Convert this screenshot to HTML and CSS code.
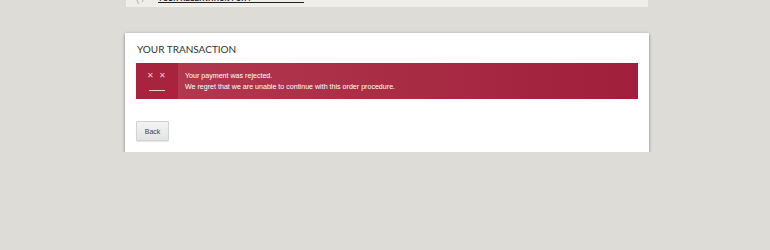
FILE: index.html
```html
<!DOCTYPE html>
<html lang="en">
<head>
  <meta charset="UTF-8">
  <meta name="viewport" content="width=device-width, initial-scale=1.0">
  <title>Your transaction</title>
  <link rel="stylesheet" href="styles.css">
</head>
<body>
  <div class="topbar">
    <span class="logo-mark">( /</span>
    <span class="reservation">YOUR RESERVATION FOR :</span>
  </div>

  <div class="card">
    <h2 class="card-title">YOUR TRANSACTION</h2>
    <div class="alert">
      <div class="alert-icon">
        <span class="crosses">&#x2715; &#x2715;</span>
        <span class="dash"></span>
      </div>
      <div class="alert-text">
        <p>Your payment was rejected.</p>
        <p>We regret that we are unable to continue with this order procedure.</p>
      </div>
    </div>
    <button class="back-btn">Back</button>
  </div>
</body>
</html>
```

FILE: styles.css
```css
body {
  margin: 0;
  background-color: #dddcd7;
  font-family: "Liberation Sans", Arial, sans-serif;
  color: #333;
}
.topbar {
  width: 522px;
  height: 7px;
  margin-left: 126px;
  background-color: #efeeea;
  position: relative;
  overflow: hidden;
}
.logo-mark {
  position: absolute;
  left: 10px;
  top: -7px;
  font-size: 10px;
  color: #aaa;
}
.reservation {
  position: absolute;
  left: 32px;
  top: -5px;
  font-size: 7px;
  font-weight: bold;
  color: #222;
  padding-right: 16px;
  border-bottom: 1px solid #222;
  width: 130px;
}
.card {
  width: 524px;
  margin: 26px 0 0 125px;
  background-color: #fff;
  box-shadow: 0 1px 3px rgba(0,0,0,0.45);
  padding: 10px 11px 11px 11px;
  box-sizing: border-box;
}
.card-title {
  margin: 0 0 8px 1px;
  height: 12px;
  font-family: Lato, "Liberation Sans", sans-serif;
  font-size: 10px;
  line-height: 12px;
  font-weight: normal;
  color: #333;
}
.alert {
  display: flex;
  height: 36px;
  background: linear-gradient(to right, #b33a50, #a01f3b);
  color: #fff;
}
.alert-icon {
  width: 42px;
  background-color: #a8233e;
  display: flex;
  flex-direction: column;
  align-items: center;
  padding-top: 8px;
  box-sizing: border-box;
}
.crosses {
  font-size: 8px;
  color: #f4c9d0;
  letter-spacing: 1px;
}
.dash {
  width: 16px;
  height: 1px;
  background-color: #f4c9d0;
  margin-top: 10px;
}
.alert-text {
  padding: 9px 0 0 7px;
  font-size: 7.1px;
}
.alert-text p {
  margin: 0 0 3px 0;
  line-height: 8px;
}
.back-btn {
  display: block;
  margin-top: 22px;
  width: 33px;
  height: 20px;
  padding: 0;
  font-family: "Liberation Sans", Arial, sans-serif;
  font-size: 7px;
  color: #444;
  background: linear-gradient(#f3f3f3, #e3e3e3);
  border: 1px solid #d2d2d2;
  border-radius: 1px;
  box-shadow: 0 1px 1px rgba(0,0,0,0.1);
}
```
